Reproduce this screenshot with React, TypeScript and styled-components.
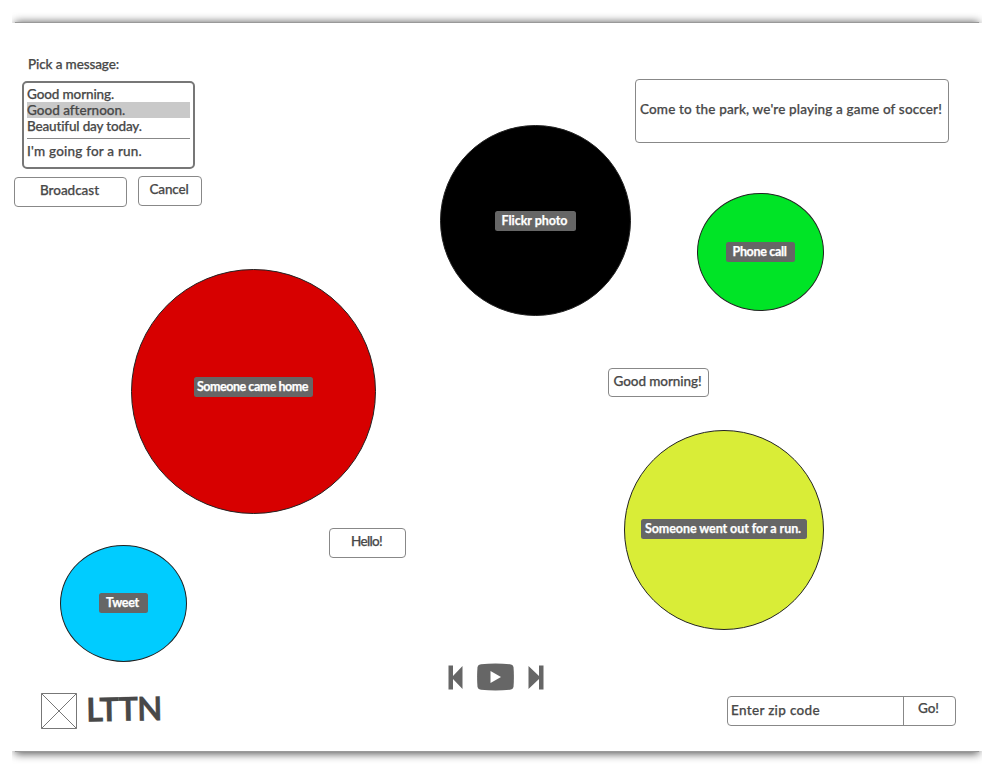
import React, { useLayoutEffect, useRef, useState } from "react";
import styled, { createGlobalStyle } from "styled-components";

const GlobalStyle = createGlobalStyle`
  * { box-sizing: border-box; }
  body { margin: 0; background: #fff; overflow: hidden; }
  button, input { font: inherit; color: inherit; }
`;

const Page = styled.div`
  width: 996px;
  height: 766px;
  padding: 0 14px 0 12px;
  display: flex;
  flex-direction: column;
  background: #fff;
  color: #484848;
  font-family: Lato, "Open Sans", sans-serif;
  font-size: 13.5px;
`;

const Edge = styled.div<{ $side: "top" | "bottom" }>`
  position: relative;
  flex: none;
  height: ${(p) => (p.$side === "top" ? 23 : 15)}px;
  overflow: hidden;
  &::after {
    content: "";
    position: absolute;
    left: 3px;
    right: 3px;
    height: 20px;
    ${(p) => (p.$side === "top" ? "top: 22px;" : "bottom: 14px;")}
    background: #999;
    box-shadow: 0 ${(p) => (p.$side === "top" ? 0 : 2)}px 9px rgba(0, 0, 0, 0.65);
  }
`;

const Board = styled.main`
  position: relative;
  flex: 1;
  display: flex;
  flex-direction: column;
  justify-content: space-between;
`;

const InkText = styled.span<{ $size?: number; $bold?: boolean }>`
  display: inline-block;
  white-space: pre;
  font-size: ${(p) => p.$size ?? 13.5}px;
  font-weight: ${(p) => (p.$bold ? 700 : 500)};
  -webkit-text-stroke: 0.25px currentColor;
  line-height: 16px;
`;

/* Tracks its text so that the line fills the given width. */
function Ink({ text, width, size, bold }: { text: string; width: number; size?: number; bold?: boolean }) {
  const ref = useRef<HTMLSpanElement>(null);
  const [tracking, setTracking] = useState(0);
  useLayoutEffect(() => {
    if (ref.current) {
      const natural = ref.current.getBoundingClientRect().width - tracking * text.length;
      setTracking((width - natural) / text.length);
    }
  }, [text, width]);
  return (
    <InkText ref={ref} $size={size} $bold={bold} style={{ letterSpacing: tracking }}>
      {text}
    </InkText>
  );
}

const Picker = styled.section`
  width: 192px;
  padding-top: 33px;
`;
const PickerTitle = styled.div`
  height: 25px;
  padding-left: 16px;
  line-height: 16px;
`;
const List = styled.div`
  width: 173px;
  height: 88px;
  margin-left: 10px;
  padding: 3px 3px;
  border: 2px solid #777;
  border-radius: 5px;
`;
const Option = styled.div<{ $selected?: boolean }>`
  height: 16px;
  display: flex;
  align-items: center;
  background: ${(p) => (p.$selected ? "#c9c9c9" : "transparent")};
`;
const Rule = styled.hr`
  margin: 4px 0;
  border: 0;
  border-top: 1px solid #888;
`;
const Actions = styled.div`
  display: flex;
  gap: 11px;
  padding: 8px 0 0 2px;
`;
const Button = styled.button<{ $width: number; $raise?: number }>`
  flex: none;
  width: ${(p) => p.$width}px;
  height: 30px;
  margin-top: ${(p) => -(p.$raise ?? 0)}px;
  padding: 0 2px 4px 0;
  display: flex;
  align-items: center;
  justify-content: center;
  border: 1px solid #888;
  border-radius: 4px;
  background: #fff;
`;

interface Place { $x: number; $y: number; $w: number; $h: number }

const Bubble = styled.div<Place & { $fill: string }>`
  position: absolute;
  left: ${(p) => p.$x - 12}px;
  top: ${(p) => p.$y - 23}px;
  width: ${(p) => p.$w}px;
  height: ${(p) => p.$h}px;
  display: grid;
  place-items: center;
  border: 1px solid #222;
  border-radius: 50%;
  background: ${(p) => p.$fill};
`;
const Tag = styled.div<{ $w: number; $lift: number }>`
  width: ${(p) => p.$w}px;
  height: 20px;
  margin: 0 1px ${(p) => p.$lift}px 0;
  padding-right: 1px;
  display: flex;
  align-items: center;
  justify-content: center;
  border-radius: 2.5px;
  background: #666;
  color: #fff;
`;
const Note = styled.div<Place & { $rise: number }>`
  position: absolute;
  left: ${(p) => p.$x - 12}px;
  top: ${(p) => p.$y - 23}px;
  width: ${(p) => p.$w}px;
  height: ${(p) => p.$h}px;
  padding: 0 2px ${(p) => p.$rise}px 0;
  display: flex;
  align-items: center;
  justify-content: center;
  border: 1px solid #888;
  border-radius: 4px;
  background: #fff;
`;

const Footer = styled.footer`
  height: 90px;
  display: grid;
  grid-template-columns: 435px 280px 229px;
  align-items: start;
`;
const Brand = styled.div`
  display: flex;
  gap: 8px;
  padding: 32px 0 0 29px;
`;
const Wordmark = styled.div`
  padding-top: 7px;
  transform: rotate(-1deg);
`;
const Player = styled.div`
  display: flex;
  align-items: center;
  gap: 14px;
  padding-top: 2px;
`;
const ZipForm = styled.div`
  display: flex;
  height: 30px;
  margin-top: 35px;
  border: 1px solid #888;
  border-radius: 4px;
`;
const ZipField = styled.div`
  width: 176px;
  padding: 5px 0 0 3px;
  border-right: 1px solid #888;
`;
const ZipGo = styled.div`
  flex: 1;
  padding: 3px 2px 0 0;
  text-align: center;
`;

const bubbles = [
  { x: 440, y: 125, w: 191, h: 191, fill: "#000", text: "Flickr photo", tag: 81, lift: 0, ink: 66 },
  { x: 697, y: 193, w: 127, h: 118, fill: "#00e426", text: "Phone call", tag: 69, lift: 1, ink: 54 },
  { x: 131, y: 269, w: 245, h: 245, fill: "#d70000", text: "Someone came home", tag: 119, lift: 9, ink: 111 },
  { x: 624, y: 430, w: 200, h: 200, fill: "#d9ed37", text: "Someone went out for a run.", tag: 166, lift: 2, ink: 156 },
  { x: 60, y: 545, w: 127, h: 117, fill: "#00ccff", text: "Tweet", tag: 49, lift: 1, ink: 33 },
];

export default function App() {
  return (
    <>
      <GlobalStyle />
      <Page>
        <Edge $side="top" />
        <Board>
          <Picker>
            <PickerTitle><Ink text="Pick a message:" width={91} /></PickerTitle>
            <List>
              <Option><Ink text="Good morning." width={87} /></Option>
              <Option $selected><Ink text="Good afternoon." width={98} /></Option>
              <Option><Ink text="Beautiful day today." width={115} /></Option>
              <Rule />
              <Option><Ink text="I'm going for a run." width={115} /></Option>
            </List>
            <Actions>
              <Button $width={113}><Ink text="Broadcast" width={59} /></Button>
              <Button $width={64} $raise={1}><Ink text="Cancel" width={39} /></Button>
            </Actions>
          </Picker>

          {bubbles.map((b) => (
            <Bubble key={b.text} $x={b.x} $y={b.y} $w={b.w} $h={b.h} $fill={b.fill}>
              <Tag $w={b.tag} $lift={b.lift}><Ink text={b.text} width={b.ink} size={12.5} bold /></Tag>
            </Bubble>
          ))}

          <Note $x={635} $y={79} $w={314} $h={64} $rise={4}>
            <Ink text="Come to the park, we're playing a game of soccer!" width={302} />
          </Note>
          <Note $x={608} $y={368} $w={101} $h={29} $rise={3}><Ink text="Good morning!" width={88} /></Note>
          <Note $x={329} $y={528} $w={77} $h={30} $rise={4}><Ink text="Hello!" width={31} /></Note>

          <Footer>
            <Brand>
              <svg width="37" height="37" viewBox="0 0 37 37" fill="none" stroke="#777">
                <path d="M.5 .5h35v35h-35zM.5 .5l35 35M35.5 .5l-35 35" />
              </svg>
              <Wordmark><Ink text="LTTN" width={76} size={33} bold /></Wordmark>
            </Brand>
            <Player>
              <svg width="16" height="25" viewBox="0 0 16 25" fill="#666">
                <path d="M1.500 .5H6v10.500L15.500 1v23L6 14v10.500H1.500z" />
              </svg>
              <svg width="37" height="28" viewBox="0 0 37 28">
                <path d="M4 1.200Q18.500-.2 33 1.200 36 1.500 36.500 4 37.300 14 36.500 24 36 26.500 33 26.800 18.500 28.200 4 26.800 1 26.500.5 24-.3 14 .5 4 1 1.500 4 1.200z" fill="#666" />
                <path d="M13.500 8L24 14 13.500 20z" fill="#fff" />
              </svg>
              <svg width="16" height="25" viewBox="0 0 16 25" fill="#666">
                <path d="M15.500 .5H11v10.500L.5 1v23L11 14v10.500h4.500z" />
              </svg>
            </Player>
            <ZipForm>
              <ZipField><Ink text="Enter zip code" width={89} /></ZipField>
              <ZipGo><Ink text="Go!" width={21} /></ZipGo>
            </ZipForm>
          </Footer>
        </Board>
        <Edge $side="bottom" />
      </Page>
    </>
  );
}
